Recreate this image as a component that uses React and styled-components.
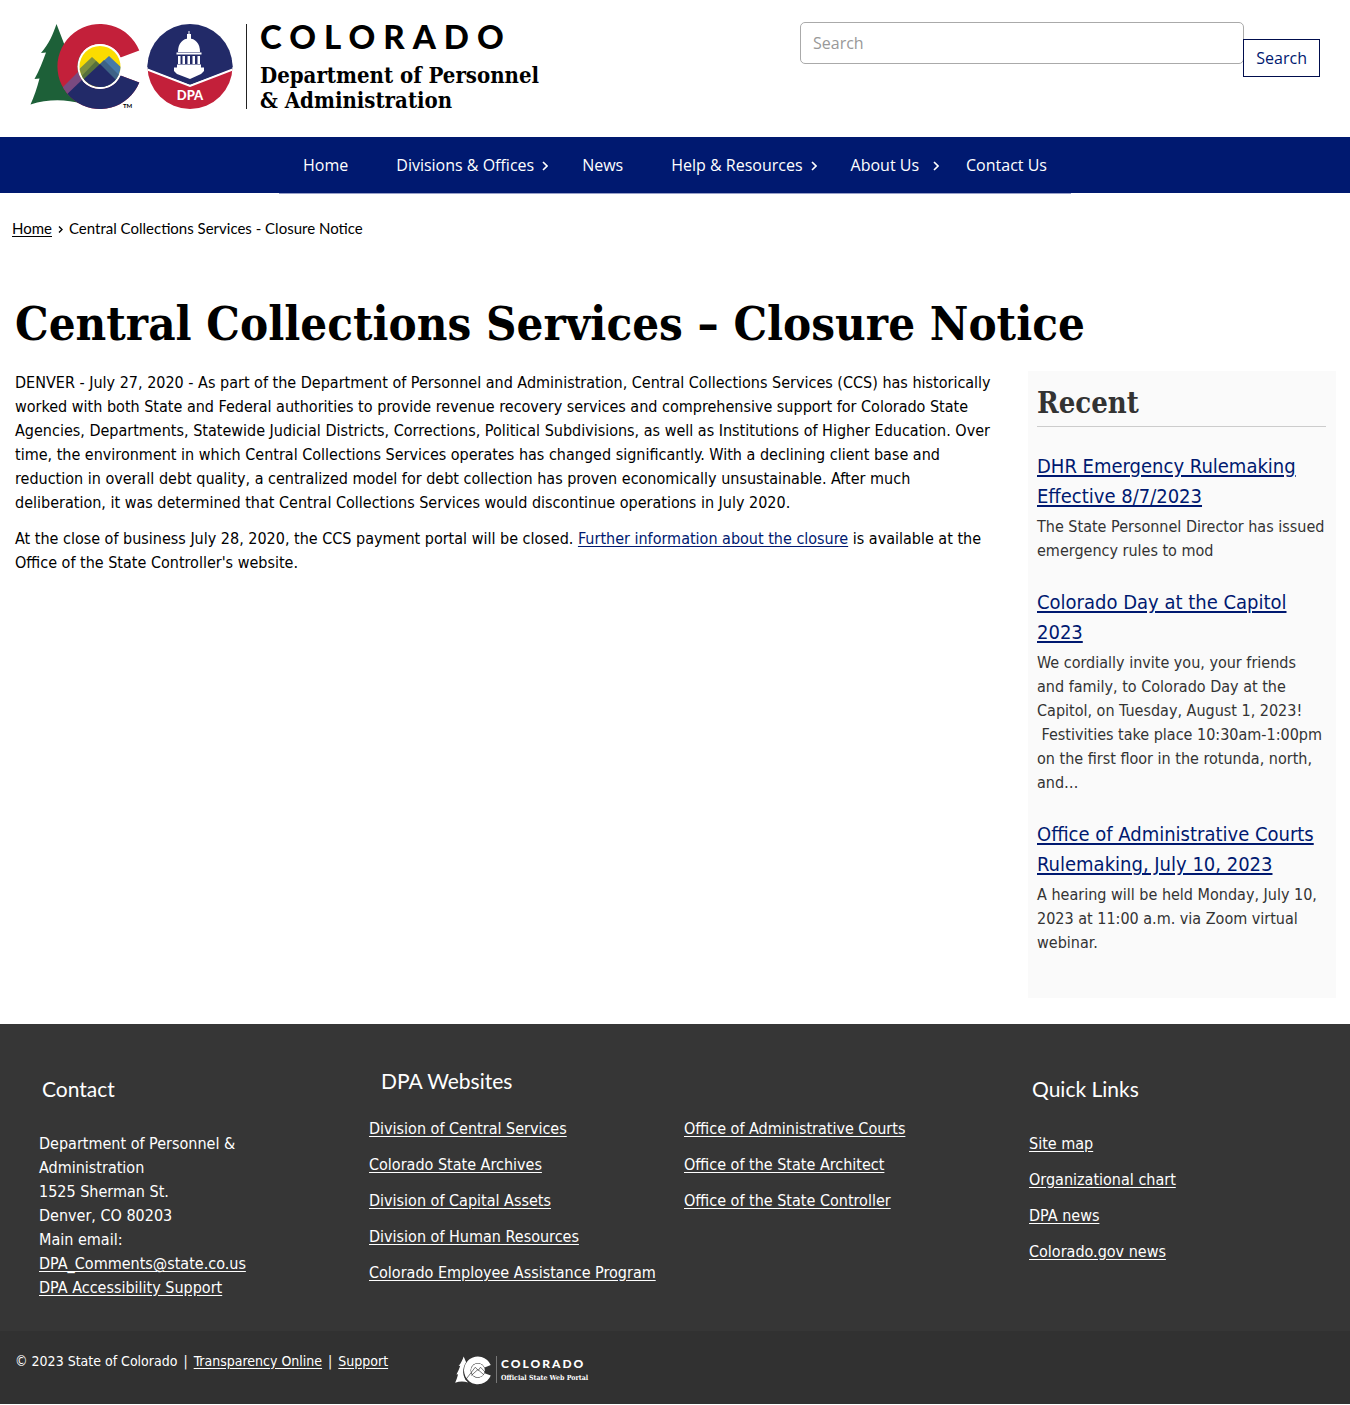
import React from 'react';
import styled, { createGlobalStyle } from 'styled-components';

const navy = '#001970';
const body = '"DejaVu Sans Condensed", "DejaVu Sans", sans-serif';
const sans = 'Lato, "Open Sans", sans-serif';
const humanist = '"Open Sans", "Noto Sans", sans-serif';
const slab = '"DejaVu Serif Condensed", "DejaVu Serif", serif';

const Global = createGlobalStyle`
  *, *::before, *::after { box-sizing: border-box; }
  body { margin: 0; background: #fff; color: #000; font: 16px/24px ${body}; }
  h1, h2, h3, p, ul, ol { margin: 0; padding: 0; }
  ul, ol { list-style: none; }
  a { color: inherit; text-underline-offset: 2px; }
`;

const Header = styled.header`
  display: flex;
  justify-content: space-between;
  align-items: flex-start;
  gap: 30px;
  padding: 22px 30px 28px;
`;
const Brand = styled.a`
  display: flex;
  align-items: center;
  padding-top: 2px;
  text-decoration: none;
`;
const Emblems = styled.svg`
  width: 203px;
  height: 85px;
  flex: none;
`;
const BrandText = styled.span`
  display: flex;
  flex-direction: column;
  height: 85px;
  margin-left: 13px;
  padding-left: 13px;
  border-left: 1px solid #222;
  font: bold 22px/25px ${slab};
  white-space: nowrap;
`;
const StateName = styled.span`
  flex: none;
  height: 39px;
  font: 900 33px/24px ${sans};
  letter-spacing: 8px;
`;

const SearchForm = styled.form`
  display: flex;
  align-items: flex-start;
  flex: 0 1 520px;
`;
const SearchBox = styled.input`
  flex: 1;
  min-width: 0;
  height: 42px;
  padding: 0 12px;
  border: 1px solid #aaa;
  border-radius: 5px;
  background: #fff;
  font: 16px/24px ${humanist};
  &::placeholder { color: #999; opacity: 1; }
`;
const SearchButton = styled.button`
  height: 38px;
  margin: 17px 0 0 -1px;
  padding: 0 12px;
  border: 1px solid #000d4d;
  background: #fff;
  color: ${navy};
  font: 500 16px/24px ${humanist};
`;

const Nav = styled.nav`
  display: flex;
  justify-content: center;
  height: 56px;
  background: ${navy};
`;
const NavList = styled.ul`
  display: flex;
  height: 57px;
  border-bottom: 1px solid #98a0c8;
`;
const NavLink = styled.a`
  display: flex;
  align-items: center;
  gap: ${p => (p.$wide ? 14 : 8)}px;
  height: 56px;
  padding: 0 ${p => (p.$wide ? 3 : p.$menu ? 10 : 24)}px 0 24px;
  color: #fff;
  font: 16px/24px ${humanist};
  text-decoration: none;
  white-space: nowrap;
`;
const Arrow = styled.svg`
  width: 6px;
  height: 10px;
  margin-top: 2px;
`;

const Crumbs = styled.ol`
  display: flex;
  align-items: center;
  gap: 6px;
  padding: 23px 12px 1px;
  font: 15px/24px ${sans};
`;
const CrumbArrow = styled.svg`
  width: 5px;
  height: 7px;
  margin-top: 2px;
`;
const CrumbItem = styled.li`
  display: flex;
  align-items: center;
  gap: 6px;
`;

const Title = styled.h1`
  padding: 55px 15px 0;
  font: bold 47px/56px ${slab};
`;
const Content = styled.div`
  display: grid;
  grid-template-columns: minmax(0, 1fr) 308px;
  column-gap: 30px;
  padding: 19px 14px 26px 15px;
`;
const Article = styled.article`
  p + p { margin-top: 12px; }
  a { color: ${navy}; }
`;
const Sidebar = styled.aside`
  padding: 12px 10px 43px 9px;
  background: #fafafa;
  color: #333;
`;
const SideTitle = styled.h2`
  padding-bottom: 3px;
  margin-bottom: 24px;
  border-bottom: 1px solid #ccc;
  font: bold 29px/40px ${slab};
`;
const Story = styled.section`
  & + & { margin-top: 24px; }
  h3 { margin-bottom: 4px; font: 20px/30px ${body}; }
  a { color: ${navy}; }
`;

const Footer = styled.footer`
  background: #363636;
  color: #fff;
`;
const FooterGrid = styled.div`
  display: grid;
  grid-template-columns: 1fr 2fr 1fr;
  min-height: 307px;
  padding: 42px 15px 30px;
`;
const FooterCol = styled.section`
  padding: ${p => (p.$main ? '0 6px' : '8px 15px')} 0 24px;
`;
const FooterTitle = styled.h2`
  margin: 0 0 ${p => (p.$main ? 21 : 28)}px;
  padding-left: ${p => (p.$main ? 12 : 3)}px;
  font: 21px/30px ${sans};
`;
const LinkColumns = styled.div`
  display: grid;
  grid-template-columns: 1fr 1fr;
`;
const LinkList = styled.ul`
  display: flex;
  flex-direction: column;
  gap: 12px;
`;
const BottomBar = styled.div`
  display: flex;
  align-items: flex-start;
  height: 73px;
  padding: 18px 15px 0;
  background: #313131;
  font: 14px/24px ${body};
`;
const Legal = styled.p`
  display: flex;
  gap: 6px;
  flex: 0 0 440px;
`;
const Portal = styled.a`
  display: flex;
  margin-top: 7px;
  text-decoration: none;
`;
const PortalIcon = styled.svg`
  width: 36px;
  height: 29px;
`;
const PortalText = styled.span`
  display: flex;
  flex-direction: column;
  height: 27px;
  margin-left: 5px;
  padding-left: 4px;
  border-left: 1px solid #777;
  font: bold 7px/12px ${slab};
`;
const PortalState = styled.span`
  flex: none;
  height: 16px;
  font: 900 12px/16px ${sans};
  letter-spacing: 2px;
`;

function Logo() {
  return (
    <Emblems viewBox="30 24 203 85" role="img" aria-label="State of Colorado, DPA">
      <defs>
        <clipPath id="c">
          <path d="M139.300 50.500A42.500 42.500 0 1 0 139.300 82.500L120.500 75.500A22.500 22.500 0 1 1 120.500 57.500Z" />
        </clipPath>
        <clipPath id="disc"><circle cx="100" cy="66.500" r="20.500" /></clipPath>
        <clipPath id="seal"><circle cx="190" cy="66.500" r="42.500" /></clipPath>
      </defs>
      <path fill="#1d6038" d="M56.500 24C53 34 49 44 41 53L46 52.500C43 61 39 71 34.500 79L39.500 78.500C37 88 34 97 30.500 104.500C48 99 66 99 82 104L84 40L68 54Z" />
      <g clipPath="url(#c)">
        <rect x="56" y="22" width="86" height="90" fill="#c3203a" />
        <path fill="#7a4a80" d="M58 92L80 70L86 78L70 96L62 100Z" />
        <path fill="#222a68" d="M62 99L84 78L120 67L142 72V112H60Z" />
      </g>
      <circle cx="100" cy="66.500" r="22.500" fill="#fff" />
      <g clipPath="url(#disc)">
        <rect x="78" y="44" width="44" height="46" fill="#fbdc00" />
        <path fill="#7f913f" d="M74 74L92 57L102 66L84 92H74Z" />
        <path fill="#4779a8" d="M98 66L109 56L124 70V92H98Z" />
        <path fill="#56703d" d="M74 84L96 61L100 65L80 86Z" />
        <path fill="#3d6286" d="M98 66L104 60L120 76L118 84Z" />
        <path fill="#222a68" d="M74 88L100 64L122 86V92H74Z" />
      </g>
      <text x="123" y="108" fontFamily="Lato, sans-serif" fontSize="6" fontWeight="700">TM</text>
      <g clipPath="url(#seal)">
        <rect x="147" y="24" width="86" height="43" fill="#222a68" />
        <path fill="#222a68" d="M147 60H233V69L190 85L147 69Z" />
        <path fill="#c3203a" d="M147 69L190 86L233 69V110H147Z" />
        <path fill="none" stroke="#fff" strokeWidth="2" d="M146 69L190 86L234 69" />
      </g>
      <g fill="#fff">
        <path d="M188.500 31h1v3h1.500v5h-4v-5h1.500z" />
        <path d="M178 52C178 43 183 38.500 189 38.500S200 43 200 52Z" />
        <rect x="176.500" y="52.500" width="25" height="2" />
        <rect x="178" y="56" width="2.500" height="8" />
        <rect x="182.500" y="56" width="2.500" height="8" />
        <rect x="187.500" y="56" width="2.500" height="8" />
        <rect x="192.500" y="56" width="2.500" height="8" />
        <rect x="197.500" y="56" width="2.500" height="8" />
        <path d="M177 64.500H201V67.500H204V71L201 74L190 79L177 74L174 71V67.500H177Z" />
      </g>
      <text x="190" y="100" textAnchor="middle" fill="#fff" fontFamily="Lato, sans-serif" fontSize="13" fontWeight="900">DPA</text>
    </Emblems>
  );
}

function SmallLogo() {
  return (
    <PortalIcon viewBox="30 24 110 86" aria-hidden="true">
      <path fill="#fff" d="M56.500 24C53 34 49 44 41 53L46 52.500C43 61 39 71 34.500 79L39.500 78.500C37 88 34 97 30.500 104.500C44 99 58 99 70 104C50 86 52 60 64 42Z" />
      <path fill="#fff" d="M139.300 50.500A42.500 42.500 0 1 0 139.300 82.500L120.500 75.500A22.500 22.500 0 1 1 120.500 57.500Z" />
      <circle cx="100" cy="66.500" r="21" fill="#fff" />
      <path fill="none" stroke="#313131" strokeWidth="2" d="M62 96L92 57L101 67L108 57L124 74M80 82L100 64L118 80" />
    </PortalIcon>
  );
}

const nav = [
  { label: 'Home' },
  { label: 'Divisions & Offices', menu: true },
  { label: 'News' },
  { label: 'Help & Resources', menu: true },
  { label: 'About Us', menu: true, wide: true },
  { label: 'Contact Us' },
];
const stories = [
  ['DHR Emergency Rulemaking Effective 8/7/2023', 'The State Personnel Director has issued emergency rules to mod'],
  ['Colorado Day at the Capitol 2023', 'We cordially invite you, your friends and family, to Colorado Day at the Capitol, on Tuesday, August 1, 2023! \u00a0Festivities take place 10:30am-1:00pm on the first floor in the rotunda, north, and…'],
  ['Office of Administrative Courts Rulemaking, July 10, 2023', 'A hearing will be held Monday, July 10, 2023 at 11:00 a.m. via Zoom virtual webinar.'],
];
const divisions = ['Division of Central Services', 'Colorado State Archives', 'Division of Capital Assets', 'Division of Human Resources', 'Colorado Employee Assistance Program'];
const offices = ['Office of Administrative Courts', 'Office of the State Architect', 'Office of the State Controller'];
const quick = ['Site map', 'Organizational chart', 'DPA news', 'Colorado.gov news'];

const Links = ({ items }) => (
  <LinkList>{items.map(t => <li key={t}><a href="#">{t}</a></li>)}</LinkList>
);

export default function App() {
  return (
    <>
      <Global />
      <Header>
        <Brand href="#">
          <Logo />
          <BrandText>
            <StateName>COLORADO</StateName>
            <span>Department of Personnel</span>
            <span>&amp; Administration</span>
          </BrandText>
        </Brand>
        <SearchForm role="search" onSubmit={e => e.preventDefault()}>
          <SearchBox type="search" placeholder="Search" aria-label="Search" />
          <SearchButton type="submit">Search</SearchButton>
        </SearchForm>
      </Header>
      <Nav aria-label="Main">
        <NavList>
          {nav.map(n => (
            <li key={n.label}>
              <NavLink href="#" $menu={n.menu} $wide={n.wide}>
                {n.label}
                {n.menu && (
                  <Arrow viewBox="0 0 6 10" aria-hidden="true">
                    <path d="M1 1L5 5L1 9" fill="none" stroke="#fff" strokeWidth="1.6" />
                  </Arrow>
                )}
              </NavLink>
            </li>
          ))}
        </NavList>
      </Nav>
      <Crumbs aria-label="Breadcrumb">
        <CrumbItem>
          <a href="#">Home</a>
          <CrumbArrow viewBox="0 0 5 7" aria-hidden="true">
            <path d="M1 .5L4 3.500L1 6.500" fill="none" stroke="#000" strokeWidth="1.4" />
          </CrumbArrow>
        </CrumbItem>
        <CrumbItem>Central Collections Services - Closure Notice</CrumbItem>
      </Crumbs>
      <main>
        <Title>Central Collections Services – Closure Notice</Title>
        <Content>
          <Article>
            <p>
              DENVER - July 27, 2020 - As part of the Department of Personnel and Administration, Central Collections
              Services (CCS) has historically worked with both State and Federal authorities to provide revenue recovery
              services and comprehensive support for Colorado State Agencies, Departments, Statewide Judicial Districts,
              Corrections, Political Subdivisions, as well as Institutions of Higher Education. Over time, the
              environment in which Central Collections Services operates has changed significantly. With a declining
              client base and reduction in overall debt quality, a centralized model for debt collection has proven
              economically unsustainable. After much deliberation, it was determined that Central Collections Services
              would discontinue operations in July 2020.
            </p>
            <p>
              At the close of business July 28, 2020, the CCS payment portal will be closed.{' '}
              <a href="#">Further information about the closure</a> is available at the Office of the State
              Controller's website.
            </p>
          </Article>
          <Sidebar>
            <SideTitle>Recent</SideTitle>
            {stories.map(([title, text]) => (
              <Story key={title}>
                <h3><a href="#">{title}</a></h3>
                <p>{text}</p>
              </Story>
            ))}
          </Sidebar>
        </Content>
      </main>
      <Footer>
        <FooterGrid>
          <FooterCol>
            <FooterTitle>Contact</FooterTitle>
            <p>Department of Personnel &amp; Administration</p>
            <p>1525 Sherman St.</p>
            <p>Denver, CO 80203</p>
            <p>Main email:</p>
            <p><a href="#">DPA_Comments@state.co.us</a></p>
            <p><a href="#">DPA Accessibility Support</a></p>
          </FooterCol>
          <FooterCol $main>
            <FooterTitle $main>DPA Websites</FooterTitle>
            <LinkColumns>
              <Links items={divisions} />
              <Links items={offices} />
            </LinkColumns>
          </FooterCol>
          <FooterCol>
            <FooterTitle>Quick Links</FooterTitle>
            <Links items={quick} />
          </FooterCol>
        </FooterGrid>
        <BottomBar>
          <Legal>
            <span>© 2023 State of Colorado</span>|<a href="#">Transparency Online</a>|<a href="#">Support</a>
          </Legal>
          <Portal href="#">
            <SmallLogo />
            <PortalText>
              <PortalState>COLORADO</PortalState>
              <span>Official State Web Portal</span>
            </PortalText>
          </Portal>
        </BottomBar>
      </Footer>
    </>
  );
}
